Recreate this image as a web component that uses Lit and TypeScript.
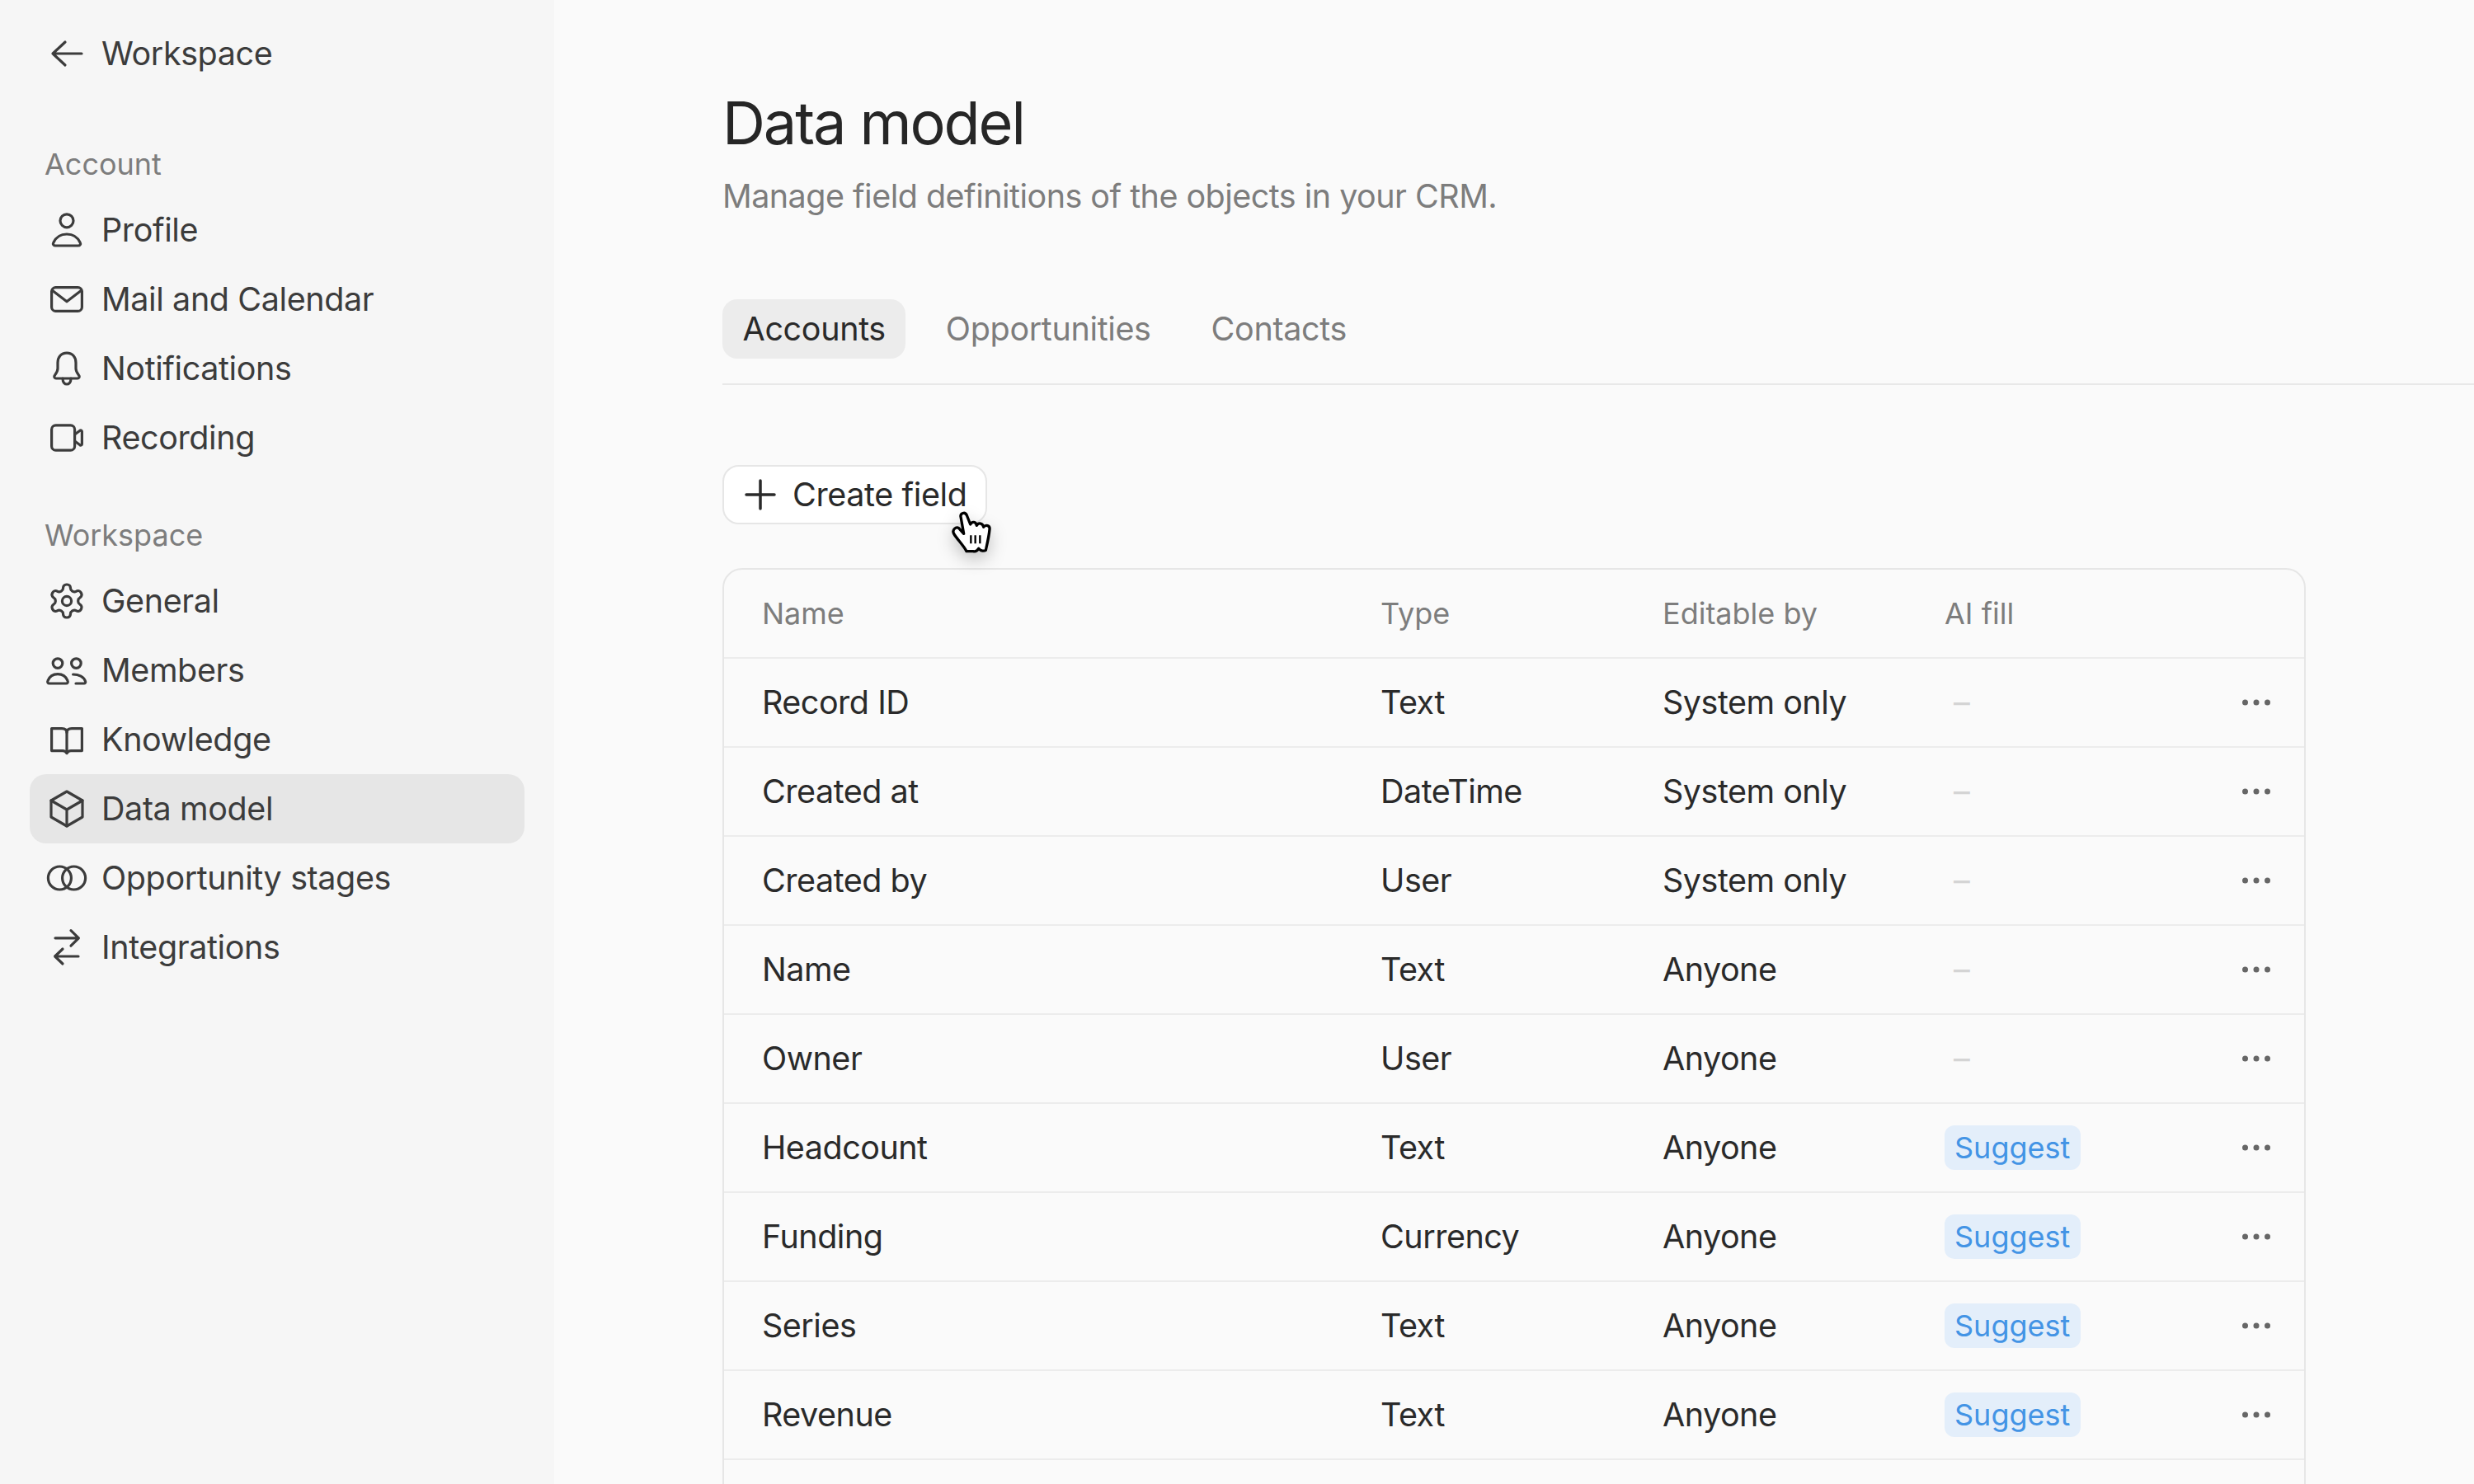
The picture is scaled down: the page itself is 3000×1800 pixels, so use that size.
import { LitElement, css, html, svg } from 'lit';
import { customElement } from 'lit/decorators.js';

const icons = {
  back: svg`<path d="M21 12H3.500M11 5l-7.500 7 7.500 7" />`,
  user: svg`<circle cx="12" cy="6.400" r="4" /><path d="M5.200 21.500c-1.200 0-1.800-1-1.300-1.900 1.600-3.300 4.600-5.100 8.100-5.100s6.500 1.800 8.100 5.100c.5.900-.1 1.900-1.300 1.900z" />`,
  mail: svg`<rect x="2.800" y="4.800" width="18.400" height="14.400" rx="2.500" /><path d="M3.200 6.600 12 13.400l8.800-6.800" />`,
  bell: svg`<path d="M12 2.600c-3.500 0-5.500 2.500-5.500 5.900V12c0 2-1.500 3.500-2 4.500-.3.700.1 1.500 1 1.500h13c.9 0 1.300-.8 1-1.500-.5-1-2-2.500-2-4.500V8.500c0-3.400-2-5.900-5.500-5.900z" /><path d="M9.500 18c0 2.500 1.300 3.500 2.500 3.500s2.500-1 2.500-3.500" />`,
  video: svg`<rect x="2.800" y="4.400" width="14" height="15.200" rx="2.500" /><path d="M16.800 10 20 7.600c.6-.4 1.200 0 1.200.6v7.600c0 .6-.6 1-1.200.6L16.800 14" />`,
  gear: svg`<path d="M12.220 2h-.44a2 2 0 0 0-2 2v.18a2 2 0 0 1-1 1.730l-.43.250a2 2 0 0 1-2 0l-.15-.08a2 2 0 0 0-2.730.730l-.22.380a2 2 0 0 0 .730 2.730l.15.100a2 2 0 0 1 1 1.720v.510a2 2 0 0 1-1 1.740l-.15.090a2 2 0 0 0-.730 2.730l.22.380a2 2 0 0 0 2.730.730l.15-.08a2 2 0 0 1 2 0l.43.250a2 2 0 0 1 1 1.730V20a2 2 0 0 0 2 2h.44a2 2 0 0 0 2-2v-.18a2 2 0 0 1 1-1.730l.43-.25a2 2 0 0 1 2 0l.15.080a2 2 0 0 0 2.730-.730l.22-.39a2 2 0 0 0-.730-2.730l-.15-.08a2 2 0 0 1-1-1.740v-.5a2 2 0 0 1 1-1.740l.15-.09a2 2 0 0 0 .730-2.730l-.22-.38a2 2 0 0 0-2.730-.730l-.15.080a2 2 0 0 1-2 0l-.43-.25a2 2 0 0 1-1-1.730V4a2 2 0 0 0-2-2z" /><circle cx="12" cy="12" r="2.800" />`,
  members: svg`<circle cx="6.500" cy="7.800" r="2.900" /><circle cx="17.700" cy="7.800" r="2.900" /><path d="M1.500 20c-1 0-1.400-.8-1-1.700 1-2.500 3.300-4 6-4s5 1.500 6 4c.4.900 0 1.700-1 1.700z" /><path d="M15.800 14.500c3.400 0 6.700 1.500 7.500 4.300.2.700-.3 1.200-.8 1.200h-5" />`,
  book: svg`<path d="M2.800 5.300H9c1.800 0 3 .9 3 2.500 0-1.600 1.200-2.500 3-2.500h6.200v13.500h-6.700c-1.200 0-1.900.5-2.500 1.500-.6-1-1.300-1.500-2.500-1.500H2.800z" /><path d="M12 7.800V20" />`,
  cube: svg`<path d="M12 1.500 21.500 7v10L12 22.500 2.500 17V7z" /><path d="M2.500 7 12 12.500 21.500 7M12 12.500v10" />`,
  rings: svg`<circle cx="7.700" cy="12" r="7" /><circle cx="16.300" cy="12" r="7" />`,
  swap: svg`<path d="M5 6.400h14M14.500 1.800 19.200 6.400l-4.700 4.700" /><path d="M19 17.500H5M9.500 13l-4.700 4.500L9.500 22" />`,
};

type IconName = keyof typeof icons;

const accountNav: [IconName, string][] = [
  ['user', 'Profile'],
  ['mail', 'Mail and Calendar'],
  ['bell', 'Notifications'],
  ['video', 'Recording'],
];

const workspaceNav: [IconName, string][] = [
  ['gear', 'General'],
  ['members', 'Members'],
  ['book', 'Knowledge'],
  ['cube', 'Data model'],
  ['rings', 'Opportunity stages'],
  ['swap', 'Integrations'],
];

const fields: [string, string, string, boolean][] = [
  ['Record ID', 'Text', 'System only', false],
  ['Created at', 'DateTime', 'System only', false],
  ['Created by', 'User', 'System only', false],
  ['Name', 'Text', 'Anyone', false],
  ['Owner', 'User', 'Anyone', false],
  ['Headcount', 'Text', 'Anyone', true],
  ['Funding', 'Currency', 'Anyone', true],
  ['Series', 'Text', 'Anyone', true],
  ['Revenue', 'Text', 'Anyone', true],
];

@customElement('app-root')
export class AppRoot extends LitElement {
  private icon(name: IconName) {
    return html`<svg class="icon" viewBox="0 0 24 24">${icons[name]}</svg>`;
  }

  private navItem([icon, label]: [IconName, string]) {
    return html`
      <div class="nav-item ${label === 'Data model' ? 'active' : ''}">
        ${this.icon(icon)}<span>${label}</span>
      </div>
    `;
  }

  render() {
    return html`
      <aside class="sidebar">
        <div class="nav-item">${this.icon('back')}<span>Workspace</span></div>
        <div class="nav-label first">Account</div>
        ${accountNav.map((item) => this.navItem(item))}
        <div class="nav-label">Workspace</div>
        ${workspaceNav.map((item) => this.navItem(item))}
      </aside>

      <main class="main">
        <h1>Data model</h1>
        <p class="subtitle">Manage field definitions of the objects in your CRM.</p>

        <div class="tabs">
          <div class="tab active">Accounts</div>
          <div class="tab">Opportunities</div>
          <div class="tab">Contacts</div>
        </div>

        <div class="create">
          <svg class="plus" viewBox="0 0 40 40"><path d="M20 3v34M3 20h34" /></svg>
          Create field
        </div>

        <div class="table">
          <div class="row head">
            <div>Name</div>
            <div>Type</div>
            <div>Editable by</div>
            <div>AI fill</div>
          </div>
          ${fields.map(
            ([name, type, editable, suggest]) => html`
              <div class="row">
                <div>${name}</div>
                <div>${type}</div>
                <div>${editable}</div>
                <div>
                  ${suggest
                    ? html`<span class="tag">Suggest</span>`
                    : html`<span class="dash">–</span>`}
                </div>
                <svg class="more" viewBox="0 0 48 24">
                  <circle cx="10.500" cy="12" r="3.500" />
                  <circle cx="24" cy="12" r="3.500" />
                  <circle cx="37.500" cy="12" r="3.500" />
                </svg>
              </div>
            `
          )}
          <div class="row"></div>
        </div>
      </main>

      <svg class="cursor" viewBox="0 0 360 270">
        <path
          class="hand"
          d="M135 110C133 98 150 90 157 105L170 138C176 126 190 128 193 142C200 130 216 134 218 148C226 138 242 142 240 156C238 180 232 205 226 232C220 236 208 236 200 226C196 234 190 238 180 236L156 236C146 215 120 190 110 172C102 158 118 145 128 152L146 172Z"
        />
        <path class="hand-lines" d="M172 178v30M188 178v30M205 178v30" />
      </svg>
    `;
  }

  static styles = css`
    :host {
      display: flex;
      position: relative;
      width: 3000px;
      height: 1800px;
      overflow: hidden;
      background: #fafafa;
      color: #2a2a2a;
      font-family: Inter, 'Liberation Sans', sans-serif;
      font-size: 39.5px;
      letter-spacing: -0.5px;
    }

    .sidebar {
      box-sizing: border-box;
      flex: none;
      width: 672px;
      height: 1800px;
      padding: 23px 36px 0;
      background: #f6f6f6;
      color: #3c3c3c;
      letter-spacing: -0.4px;
    }

    .nav-item {
      display: flex;
      align-items: center;
      gap: 18px;
      height: 84px;
      padding-left: 21px;
      border-radius: 20px;
    }

    .nav-item.active {
      background: #e6e6e6;
    }

    .icon {
      flex: none;
      width: 48px;
      height: 48px;
      overflow: visible;
      fill: none;
      stroke: #3c3c3c;
      stroke-width: 1.6;
      stroke-linecap: round;
      stroke-linejoin: round;
    }

    .nav-label {
      display: flex;
      align-items: center;
      height: 76px;
      margin-top: 38px;
      padding-left: 18px;
      color: #7d7d7d;
      font-size: 36px;
      letter-spacing: 0;
    }

    .nav-label.first {
      margin-top: 54px;
    }

    .main {
      flex: 1;
      min-width: 0;
      padding: 104px 0 0 204px;
    }

    h1 {
      margin: 0;
      font-size: 72px;
      line-height: 90px;
      font-weight: 400;
      letter-spacing: -2.1px;
      color: #262626;
    }

    .subtitle {
      margin: 14px 0 0;
      line-height: 60px;
      color: #7d7d7d;
      letter-spacing: -0.53px;
    }

    .tabs {
      display: flex;
      gap: 24px;
      margin-top: 95px;
      padding-bottom: 30px;
      border-bottom: 2px solid #e8e8e8;
      letter-spacing: -0.35px;
    }

    .tab {
      display: flex;
      align-items: center;
      height: 72px;
      padding: 0 24.5px;
      border-radius: 18px;
      color: #7d7d7d;
    }

    .tab.active {
      background: #ececec;
      color: #2a2a2a;
    }

    .create {
      box-sizing: border-box;
      display: flex;
      align-items: center;
      gap: 19px;
      width: 321px;
      height: 72px;
      margin-top: 97px;
      padding-left: 24px;
      background: #fff;
      border: 2px solid #e6e6e6;
      border-radius: 20px;
      letter-spacing: -0.4px;
    }

    .plus {
      width: 40px;
      height: 40px;
      fill: none;
      stroke: #2a2a2a;
      stroke-width: 3.500;
      stroke-linecap: round;
    }

    .table {
      box-sizing: border-box;
      width: 1920px;
      margin-top: 53px;
      border: 2px solid #e6e6e6;
      border-radius: 24px;
    }

    .row {
      box-sizing: border-box;
      display: grid;
      grid-template-columns: 750px 342px 342px 1fr 48px;
      align-items: center;
      height: 108px;
      padding: 0 34px 0 46px;
      border-bottom: 2px solid #ececec;
    }

    .row.head {
      color: #7d7d7d;
      font-size: 36px;
      letter-spacing: 0;
    }

    .tag {
      display: inline-flex;
      align-items: center;
      height: 54px;
      padding: 0 13px 0 12px;
      background: #e3eefa;
      border-radius: 12px;
      color: #4394e5;
      font-size: 36px;
      letter-spacing: 0;
    }

    .dash {
      padding-left: 11px;
      color: #d4d4d4;
    }

    .more {
      width: 48px;
      height: 24px;
      fill: #666;
    }

    .cursor {
      position: absolute;
      left: 1120px;
      top: 590px;
      width: 120px;
      height: 90px;
      overflow: visible;
      filter: drop-shadow(0 8px 10px rgba(0, 0, 0, 0.22));
    }

    .hand {
      fill: #fff;
      stroke: #000;
      stroke-width: 10;
      stroke-linejoin: round;
    }

    .hand-lines {
      fill: none;
      stroke: #000;
      stroke-width: 7;
    }
  `;
}

declare global {
  interface HTMLElementTagNameMap {
    'app-root': AppRoot;
  }
}
